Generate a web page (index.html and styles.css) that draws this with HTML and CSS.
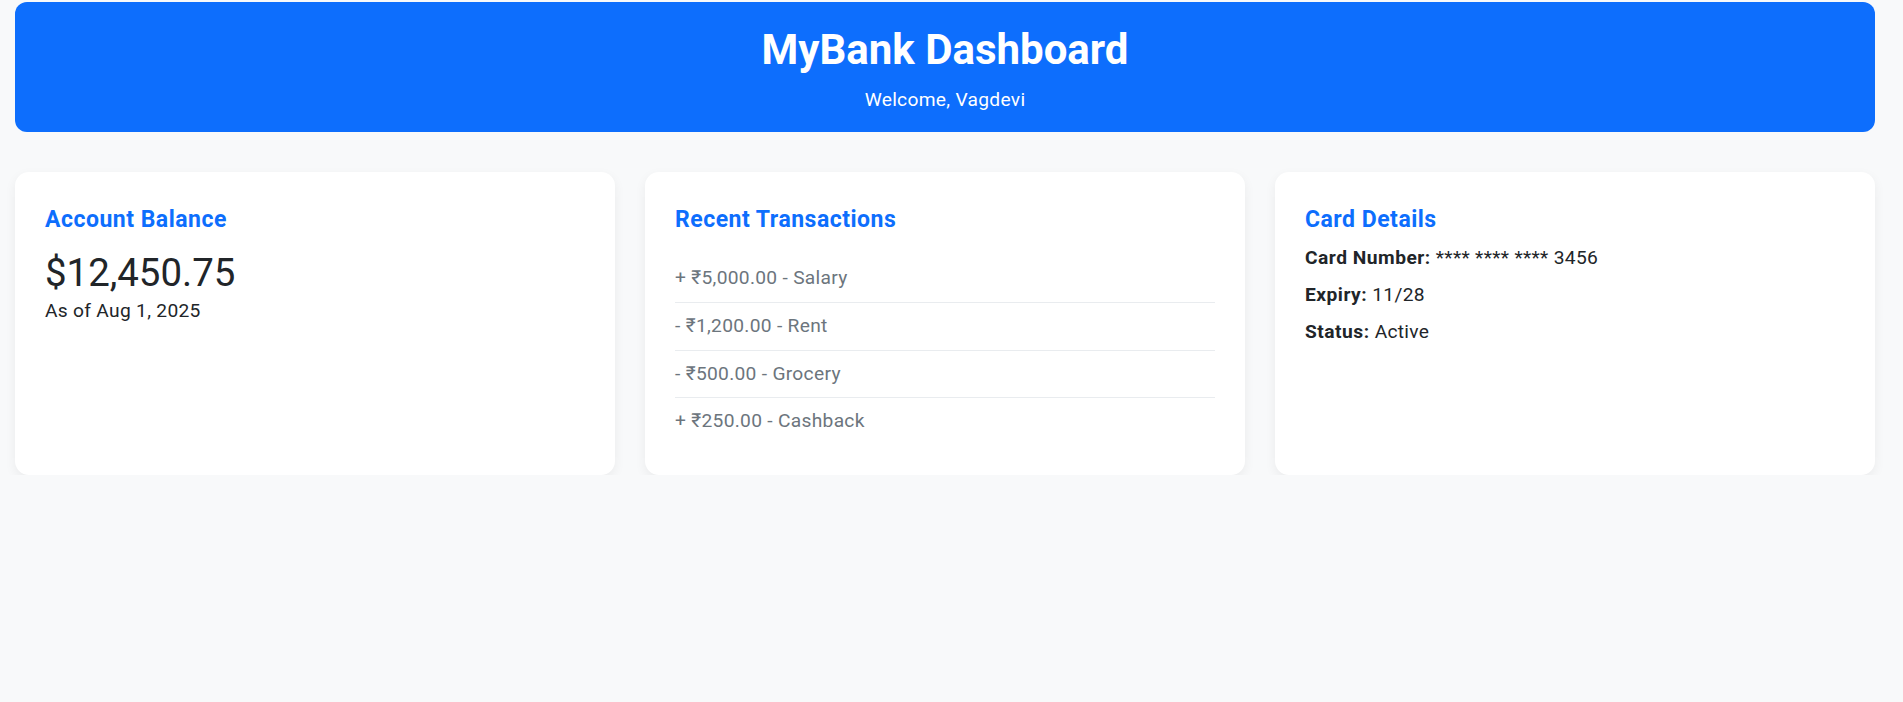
FILE: index.html
```html
<!DOCTYPE html>
<html lang="en">
<head>
<meta charset="utf-8">
<title>MyBank Dashboard</title>
<link rel="stylesheet" href="styles.css">
</head>
<body>
  <header class="hero">
    <h1 class="hero-title">MyBank Dashboard</h1>
    <p class="hero-sub">Welcome, Vagdevi</p>
  </header>

  <main class="cards">
    <section class="card">
      <h3 class="card-title">Account Balance</h3>
      <p class="balance">$12,450.75</p>
      <p class="balance-date">As of Aug 1, 2025</p>
    </section>

    <section class="card">
      <h3 class="card-title">Recent Transactions</h3>
      <ul class="tx-list">
        <li class="tx">+ ₹5,000.00 - Salary</li>
        <li class="tx">- ₹1,200.00 - Rent</li>
        <li class="tx">- ₹500.00 - Grocery</li>
        <li class="tx">+ ₹250.00 - Cashback</li>
      </ul>
    </section>

    <section class="card">
      <h3 class="card-title">Card Details</h3>
      <p class="detail"><strong>Card Number:</strong> **** **** **** 3456</p>
      <p class="detail"><strong>Expiry:</strong> 11/28</p>
      <p class="detail"><strong>Status:</strong> Active</p>
    </section>
  </main>
</body>
</html>
```

FILE: styles.css
```css
* {
  box-sizing: border-box;
}

html, body {
  background: #f8f9fa;
}

body {
  margin: 0;
  padding: 2px 28px 0 15px;
  font-family: Roboto, "Noto Sans", "Liberation Sans", sans-serif;
  font-size: 19.2px;
  line-height: 1.5;
  letter-spacing: 0.3px;
  color: #212529;
}

.hero {
  background: #0d6efd;
  color: #ffffff;
  border-radius: 12px;
  text-align: center;
  height: 130px;
  padding: 22.7px 0 0;
}

.hero-title {
  margin: 0 0 10.9px;
  font-size: 42px;
  line-height: 1.2;
  font-weight: 700;
  letter-spacing: 0;
}

.hero-sub {
  margin: 0;
  font-size: 19.2px;
  line-height: 28.8px;
}

.cards {
  display: grid;
  grid-template-columns: repeat(3, 1fr);
  gap: 30px;
  margin-top: 40px;
}

.card {
  display: flex;
  flex-direction: column;
  background: #ffffff;
  border-radius: 14px;
  padding: 30px;
  box-shadow: 0 4px 12px rgba(0, 0, 0, 0.06);
}

.card-title {
  margin: 3.6px 0 10.8px;
  color: #0d6efd;
  font-size: 23px;
  line-height: 1.2;
  font-weight: 700;
  letter-spacing: 0.5px;
}

.balance {
  margin: 6.5px 0 0;
  font-size: 38.4px;
  line-height: 1.2;
  font-weight: 400;
  letter-spacing: 0;
}

.balance-date {
  margin: 0;
  line-height: 28.8px;
}

.tx-list {
  list-style: none;
  margin: 11px 0 0;
  padding: 0;
}

.tx {
  color: #6c757d;
  padding: 9px 0;
  line-height: 28.8px;
  border-bottom: 1px solid #e9ecef;
}

.tx:last-child {
  border-bottom: none;
}

.detail {
  margin: 0 0 8.2px;
  line-height: 28.8px;
}

.detail strong {
  font-weight: 700;
  letter-spacing: 0.5px;
}
```
